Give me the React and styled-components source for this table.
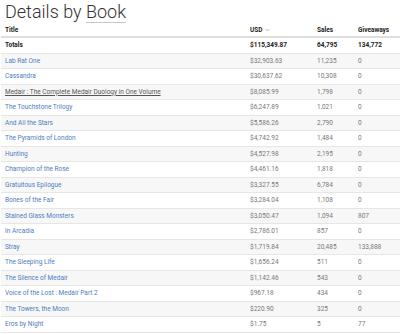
import React from 'react';
import styled, { createGlobalStyle } from 'styled-components';

const GlobalStyle = createGlobalStyle`
  html, body {
    margin: 0;
    padding: 0;
    background: #ffffff;
    font-family: Roboto, "Liberation Sans", sans-serif;
    overflow: hidden;
  }
`;

const Page = styled.div`
  width: 400px;
  height: 334px;
  overflow: hidden;
  padding: 0 0 0 1px;
  box-sizing: border-box;
`;

const Heading = styled.h1`
  margin: 0;
  padding: 3px 0 0 4px;
  height: 20px;
  font-size: 18px;
  line-height: 17px;
  font-weight: 300;
  color: #333;
  span {
    border-bottom: 1px solid #c8c8c8;
  }
`;

const Row = styled.div`
  display: grid;
  grid-template-columns: 245px 67px 41px 1fr;
  align-items: ${p => (p.$head ? 'end' : 'center')};
  padding-left: 4px;
  padding-bottom: ${p => (p.$head ? '2px' : '0')};
  height: ${p => (p.$head ? '11px' : '14.5px')};
  border-bottom: ${p => (p.$head ? '2px solid #dedede' : '1px solid #e6e6e6')};
  background: ${p => (p.$striped ? '#f7f7f7' : '#ffffff')};
  font-size: 6.5px;
  color: ${p => (p.$bold ? '#222' : '#777')};
  font-weight: ${p => (p.$bold ? 700 : 400)};
`;

const Cell = styled.div`
  white-space: nowrap;
  display: flex;
  align-items: center;
  gap: 2px;
`;

const BookLink = styled.a`
  color: ${p => (p.$active ? '#555' : '#4f7dbd')};
  text-decoration: ${p => (p.$active ? 'underline' : 'none')};
`;

const Chevron = () => (
  <svg width="5" height="4" viewBox="0 0 5 4">
    <path d="M0.5 1 L2.5 3 L4.5 1" fill="none" stroke="#999" strokeWidth="0.7" />
  </svg>
);

const books = [
  ['Lab Rat One', '$32,903.63', '11,235', '0'],
  ['Cassandra', '$30,637.62', '10,308', '0'],
  ['Medair : The Complete Medair Duology in One Volume', '$8,085.99', '1,798', '0'],
  ['The Touchstone Trilogy', '$6,247.89', '1,021', '0'],
  ['And All the Stars', '$5,586.26', '2,790', '0'],
  ['The Pyramids of London', '$4,742.92', '1,484', '0'],
  ['Hunting', '$4,527.98', '2,195', '0'],
  ['Champion of the Rose', '$4,461.16', '1,818', '0'],
  ['Gratuitous Epilogue', '$3,327.55', '6,784', '0'],
  ['Bones of the Fair', '$3,284.04', '1,108', '0'],
  ['Stained Glass Monsters', '$3,050.47', '1,094', '807'],
  ['In Arcadia', '$2,786.01', '857', '0'],
  ['Stray', '$1,719.84', '20,485', '133,888'],
  ['The Sleeping Life', '$1,656.24', '511', '0'],
  ['The Silence of Medair', '$1,142.46', '543', '0'],
  ['Voice of the Lost : Medair Part 2', '$967.18', '434', '0'],
  ['The Towers, the Moon', '$220.90', '325', '0'],
  ['Eros by Night', '$1.75', '5', '77'],
];

export default function App() {
  return (
    <Page>
      <GlobalStyle />
      <Heading>
        Details by <span>Book</span>
      </Heading>
      <Row $head $bold>
        <Cell>Title</Cell>
        <Cell>
          USD <Chevron />
        </Cell>
        <Cell>Sales</Cell>
        <Cell>Giveaways</Cell>
      </Row>
      <Row $bold>
        <Cell>Totals</Cell>
        <Cell>$115,349.87</Cell>
        <Cell>64,795</Cell>
        <Cell>134,772</Cell>
      </Row>
      {books.map(([title, usd, sales, give], i) => (
        <Row key={title} $striped={i % 2 === 0}>
          <Cell>
            <BookLink href="#" $active={i === 2}>
              {title}
            </BookLink>
          </Cell>
          <Cell>{usd}</Cell>
          <Cell>{sales}</Cell>
          <Cell>{give}</Cell>
        </Row>
      ))}
    </Page>
  );
}
